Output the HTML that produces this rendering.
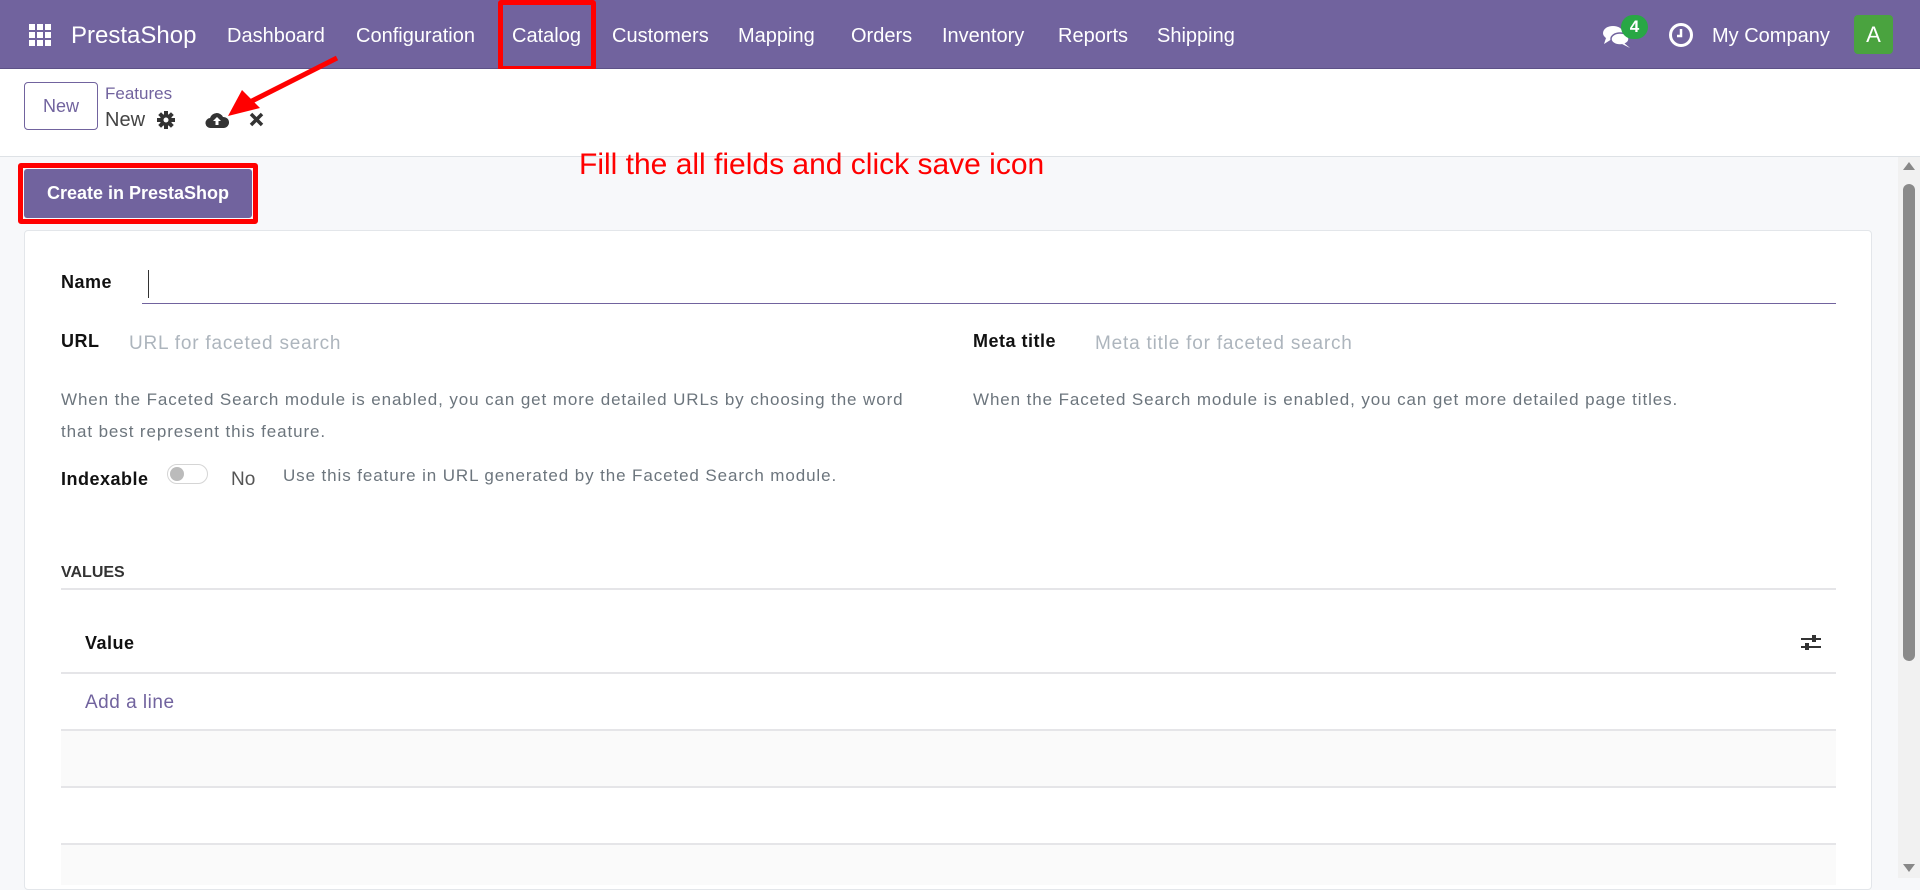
<!DOCTYPE html>
<html><head><meta charset="utf-8"><style>
*{box-sizing:border-box;margin:0;padding:0}
body{width:1920px;height:878px;overflow:hidden;background:#f7f8fa;font-family:"Liberation Sans",sans-serif;position:relative;color:#212529}
.a{position:absolute;white-space:nowrap}
.nav{position:absolute;left:0;top:0;width:1920px;height:69px;background:#71639e;border-bottom:1px solid #5d5187}
.nav .m{position:absolute;top:25px;color:#fff;font-size:20px}
.cp{position:absolute;left:0;top:69px;width:1920px;height:88px;background:#fff;border-bottom:1px solid #dee2e6}
.card{position:absolute;left:24px;top:230px;width:1848px;height:660px;background:#fff;border:1px solid #e3e6ea;border-radius:4px}
.lbl{font-weight:bold;font-size:18px;color:#111;letter-spacing:0.5px}
.ph{font-size:19px;color:#adb5bd;letter-spacing:0.8px}
.help{font-size:17px;color:#6c757d;letter-spacing:0.9px}
.row{position:absolute;left:61px;width:1775px;border-bottom:2px solid #e5e5e8}
</style></head><body>
<div class="nav">
  <svg class="a" style="left:29px;top:24px" width="22" height="22" viewBox="0 0 22 22" fill="#fff"><rect x="0" y="0" width="6" height="6"/><rect x="8" y="0" width="6" height="6"/><rect x="16" y="0" width="6" height="6"/><rect x="0" y="8" width="6" height="6"/><rect x="8" y="8" width="6" height="6"/><rect x="16" y="8" width="6" height="6"/><rect x="0" y="16" width="6" height="6"/><rect x="8" y="16" width="6" height="6"/><rect x="16" y="16" width="6" height="6"/></svg>
  <div class="m" style="left:71px;top:22px;font-size:24px">PrestaShop</div>
  <div class="m" style="left:227px">Dashboard</div>
  <div class="m" style="left:356px">Configuration</div>
  <div class="m" style="left:512px">Catalog</div>
  <div class="m" style="left:612px">Customers</div>
  <div class="m" style="left:738px">Mapping</div>
  <div class="m" style="left:851px">Orders</div>
  <div class="m" style="left:942px">Inventory</div>
  <div class="m" style="left:1058px">Reports</div>
  <div class="m" style="left:1157px">Shipping</div>
  <svg class="a" style="left:1602px;top:24px" width="30" height="24" viewBox="0 0 30 24" fill="#fff"><ellipse cx="11" cy="9" rx="10" ry="7"/><path d="M4 14 L2 20 L10 15Z"/><ellipse cx="18" cy="15" rx="9" ry="6" fill="#fff" stroke="#71639e" stroke-width="1.5"/><path d="M22 19 L28 24 L20 20Z"/></svg>
  <div class="a" style="left:1621px;top:15px;width:27px;height:24px;border-radius:12px;background:#28a745;color:#fff;font-size:17px;font-weight:bold;text-align:center;line-height:24px">4</div>
  <svg class="a" style="left:1668px;top:22px" width="26" height="26" viewBox="0 0 26 26"><circle cx="13" cy="13" r="10.5" fill="none" stroke="#fff" stroke-width="3"/><path d="M13 7v7h-4" fill="none" stroke="#fff" stroke-width="2.5"/></svg>
  <div class="m" style="left:1712px">My Company</div>
  <div class="a" style="left:1854px;top:15px;width:39px;height:39px;border-radius:4px;background:#4aa33f;color:#fff;font-size:22px;text-align:center;line-height:39px">A</div>
</div>
<div class="a" style="left:498px;top:0;width:98px;height:71px;border:5px solid #f00;border-radius:3px"></div>
<div class="cp"></div>
<div class="a" style="left:24px;top:82px;width:74px;height:48px;border:1px solid #71639e;border-radius:4px;color:#71639e;font-size:18px;text-align:center;line-height:46px">New</div>
<div class="a" style="left:105px;top:84px;font-size:17px;color:#71639e">Features</div>
<div class="a" style="left:105px;top:109px;font-size:20px;color:#444">New</div>
<svg class="a" style="left:157px;top:111px" width="18" height="18" viewBox="0 0 18 18"><g fill="#333"><circle cx="9" cy="9" r="6"/><rect x="7" y="0" width="4" height="18"/><rect x="0" y="7" width="18" height="4"/><rect x="7" y="0" width="4" height="18" transform="rotate(45 9 9)"/><rect x="7" y="0" width="4" height="18" transform="rotate(-45 9 9)"/></g><circle cx="9" cy="9" r="2.5" fill="#fff"/></svg>
<svg class="a" style="left:205px;top:111px" width="24" height="18" viewBox="0 0 24 18"><path d="M6 17 A5 5 0 0 1 5 7 A7 7 0 0 1 18 6 A5.5 5.5 0 0 1 19 17Z" fill="#333"/><path d="M12 6 L8 10 H10.5 V14 H13.5 V10 H16Z" fill="#fff"/></svg>
<svg class="a" style="left:249px;top:112px" width="15" height="15" viewBox="0 0 15 15"><path d="M2 2 L13 13 M13 2 L2 13" stroke="#333" stroke-width="3.5"/></svg>
<svg class="a" style="left:220px;top:52px" width="130" height="75" viewBox="0 0 130 75"><path d="M117 6 L30 50" stroke="#f00" stroke-width="5"/><path d="M8 64 L22 38 L40 56Z" fill="#f00"/></svg>
<div class="a" style="left:24px;top:169px;width:228px;height:49px;background:#71639e;color:#fff;font-weight:bold;font-size:18px;text-align:center;line-height:49px;border-radius:3px">Create in PrestaShop</div>
<div class="a" style="left:18px;top:163px;width:240px;height:61px;border:5px solid #f00;border-radius:3px"></div>
<div class="a" style="left:579px;top:148px;font-size:30px;color:#f00">Fill the all fields and click save icon</div>
<div class="card"></div>
<div class="a lbl" style="left:61px;top:272px">Name</div>
<div class="a" style="left:148px;top:270px;width:1px;height:28px;background:#333"></div>
<div class="a" style="left:142px;top:303px;width:1694px;height:1px;background:#71639e"></div>
<div class="a lbl" style="left:61px;top:331px">URL</div>
<div class="a ph" style="left:129px;top:333px">URL for faceted search</div>
<div class="a lbl" style="left:973px;top:331px">Meta title</div>
<div class="a ph" style="left:1095px;top:333px">Meta title for faceted search</div>
<div class="a help" style="left:61px;top:390px">When the Faceted Search module is enabled, you can get more detailed URLs by choosing the word</div>
<div class="a help" style="left:61px;top:422px">that best represent this feature.</div>
<div class="a help" style="left:973px;top:390px">When the Faceted Search module is enabled, you can get more detailed page titles.</div>
<div class="a lbl" style="left:61px;top:469px">Indexable</div>
<div class="a" style="left:167px;top:464px;width:41px;height:20px;border:1px solid #d5d5d5;border-radius:10px;background:#fff"></div>
<div class="a" style="left:170px;top:467px;width:14px;height:14px;border-radius:7px;background:#bbb"></div>
<div class="a" style="left:231px;top:469px;font-size:19px;color:#555">No</div>
<div class="a help" style="left:283px;top:466px">Use this feature in URL generated by the Faceted Search module.</div>
<div class="a" style="left:61px;top:564px;font-size:16px;font-weight:bold;color:#333">VALUES</div>
<div class="a" style="left:61px;top:588px;width:1775px;height:2px;background:#e5e5e8"></div>
<div class="a lbl" style="left:85px;top:633px">Value</div>
<svg class="a" style="left:1800px;top:633px" width="22" height="20" viewBox="0 0 22 20"><path d="M1 6H21M1 14H21" stroke="#333" stroke-width="2"/><rect x="12" y="2" width="4" height="7" fill="#333"/><rect x="5" y="10" width="4" height="7" fill="#333"/></svg>
<div class="row" style="top:630px;height:44px"></div>
<div class="a" style="left:85px;top:692px;font-size:19px;color:#71639e;letter-spacing:0.5px">Add a line</div>
<div class="row" style="top:674px;height:57px"></div>
<div class="row" style="top:731px;height:57px;background:#fafafa"></div>
<div class="row" style="top:788px;height:57px"></div>
<div class="row" style="top:845px;height:40px;background:#fafafa;border:none"></div>
<div class="a" style="left:1898px;top:157px;width:22px;height:721px;background:#f1f1f1"></div>
<div class="a" style="left:1903px;top:162px;width:0;height:0;border-left:6px solid transparent;border-right:6px solid transparent;border-bottom:8px solid #888"></div>
<div class="a" style="left:1903px;top:184px;width:12px;height:477px;border-radius:6px;background:#8a8a8a"></div>
<div class="a" style="left:1903px;top:864px;width:0;height:0;border-left:6px solid transparent;border-right:6px solid transparent;border-top:8px solid #888"></div>
</body></html>
